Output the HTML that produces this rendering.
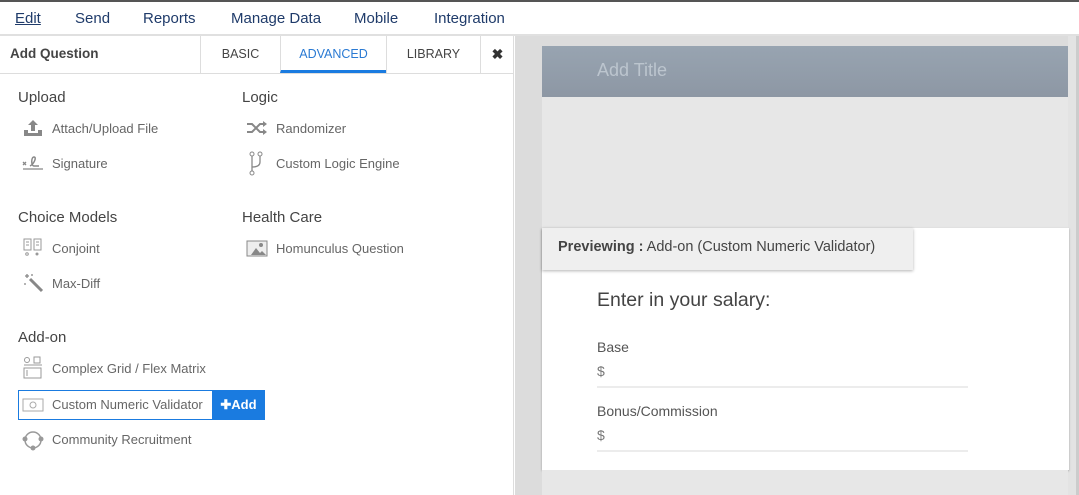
<!DOCTYPE html>
<html><head><style>
*{margin:0;padding:0;box-sizing:border-box}
body{width:1079px;height:495px;overflow:hidden;background:#fff;font-family:"Liberation Sans",sans-serif;position:relative}
.abs{position:absolute}
.nav{left:0;top:0;width:1079px;height:36px;border-top:2px solid #555;border-bottom:2px solid #e0e0e0;background:#fff}
.nav span{position:absolute;top:8px;font-size:15px;color:#1f3b6a}
.left{left:0;top:36px;width:514px;height:459px;background:#fff;border-right:1px solid #ddd}
.hdr{left:0;top:36px;width:514px;height:38px;border-bottom:1px solid #ddd}
.tab{position:absolute;top:0;height:37px;font-size:12.5px;color:#444;text-align:center;line-height:36px;border-left:1px solid #ddd}
.sec{position:absolute;font-size:15px;color:#444}
.it{position:absolute;font-size:13px;color:#666}
.ic{position:absolute;width:22px;height:20px}
.right{left:515px;top:36px;width:564px;height:459px;background:#dcdcdc}
</style></head><body>
<div class="abs nav">
<span style="left:15px;text-decoration:underline;color:#1f3b6a">Edit</span>
<span style="left:75px">Send</span>
<span style="left:143px">Reports</span>
<span style="left:231px">Manage Data</span>
<span style="left:354px">Mobile</span>
<span style="left:434px">Integration</span>
</div>
<div class="abs left"></div>
<div class="abs hdr">
<div style="position:absolute;left:10px;top:10px;font-size:13.5px;font-weight:bold;color:#444">Add Question</div>
<div class="tab" style="left:200px;width:80px">BASIC</div>
<div class="tab" style="left:280px;width:106px;color:#2a7ad3;border-bottom:3px solid #1a7be0;height:37px">ADVANCED</div>
<div class="tab" style="left:386px;width:94px">LIBRARY</div>
<div class="tab" style="left:480px;width:34px;font-weight:bold;font-size:14px;color:#333">✖</div>
</div>
<div class="sec" style="left:18px;top:89px">Upload</div>
<div class="sec" style="left:242px;top:89px">Logic</div>
<div class="sec" style="left:18px;top:209px">Choice Models</div>
<div class="sec" style="left:242px;top:209px">Health Care</div>
<div class="sec" style="left:18px;top:329px">Add-on</div>

<svg class="ic" style="left:22px;top:118px" viewBox="0 0 22 20"><path d="M11 2l-5 5h3v6h4V7h3z M2 12h4v3h10v-3h4v6H2z" fill="#888"/></svg>
<div class="it" style="left:52px;top:121px">Attach/Upload File</div>
<svg class="ic" style="left:22px;top:153px" viewBox="0 0 22 20"><path d="M1 9l3 3M4 9l-3 3M1 16h20" stroke="#888" stroke-width="1.3"/><path d="M8 13c4-2 7-9 4-9s-3 9 0 9h5" stroke="#888" fill="none" stroke-width="1.5"/></svg>
<div class="it" style="left:52px;top:156px">Signature</div>
<svg class="ic" style="left:246px;top:118px" viewBox="0 0 22 20"><path d="M1 6h5l8 8h5M1 14h5l8-8h5" stroke="#888" fill="none" stroke-width="2"/><path d="M17 3l4 3-4 3zM17 11l4 3-4 3z" fill="#888"/></svg>
<div class="it" style="left:276px;top:121px">Randomizer</div>
<svg class="ic" style="left:246px;top:151px;height:26px" viewBox="0 0 22 26"><circle cx="6" cy="3" r="2" stroke="#888" fill="none"/><circle cx="14" cy="3" r="2" stroke="#888" fill="none"/><circle cx="6" cy="22" r="2" stroke="#888" fill="none"/><path d="M6 5v15M14 5v6q0 5-8 5" stroke="#888" fill="none" stroke-width="1.3"/></svg>
<div class="it" style="left:276px;top:156px">Custom Logic Engine</div>

<svg class="ic" style="left:22px;top:238px" viewBox="0 0 22 20"><rect x="2" y="1" width="7" height="11" stroke="#999" fill="none"/><rect x="12" y="1" width="7" height="11" stroke="#999" fill="none"/><path d="M4 4h3M4 7h3M14 4h3M14 7h3" stroke="#999"/><circle cx="5" cy="16" r="1.3" stroke="#999" fill="none"/><circle cx="15" cy="16" r="1.5" fill="#999"/></svg>
<div class="it" style="left:52px;top:241px">Conjoint</div>
<svg class="ic" style="left:22px;top:273px" viewBox="0 0 22 20"><path d="M8 6l12 12" stroke="#888" stroke-width="3"/><path d="M5 1v4M3 3h4M2 11l2 0M10 1l0 2" stroke="#888" stroke-width="1.3"/></svg>
<div class="it" style="left:52px;top:276px">Max-Diff</div>
<svg class="ic" style="left:246px;top:238px" viewBox="0 0 22 20"><rect x="1" y="3" width="20" height="15" stroke="#888" fill="#eee"/><path d="M5 17l5-7 4 5 2-2 4 4z" fill="#888"/><circle cx="15" cy="7" r="2" fill="#888"/></svg>
<div class="it" style="left:276px;top:241px">Homunculus Question</div>

<svg class="ic" style="left:22px;top:356px;height:24px" viewBox="0 0 22 24"><circle cx="5" cy="4" r="2.5" stroke="#999" fill="none"/><rect x="12" y="1" width="6" height="6" stroke="#999" fill="none"/><path d="M2 9h18" stroke="#999"/><rect x="2" y="12" width="17" height="10" stroke="#999" fill="none"/><path d="M5 14v6" stroke="#999"/></svg>
<div class="it" style="left:52px;top:361px">Complex Grid / Flex Matrix</div>
<div class="abs" style="left:18px;top:390px;width:247px;height:30px;border:1px solid #1a7be0;background:#fff"></div>
<svg class="ic" style="left:22px;top:395px" viewBox="0 0 22 20"><rect x="1" y="4" width="20" height="12" stroke="#aaa" fill="none"/><circle cx="11" cy="10" r="3" stroke="#aaa" fill="none"/></svg>
<div class="it" style="left:52px;top:397px">Custom Numeric Validator</div>
<div class="abs" style="left:212px;top:390px;width:53px;height:30px;background:#1a7be0;color:#fff;font-size:13px;font-weight:bold;line-height:29px;text-align:center">✚Add</div>
<svg class="ic" style="left:22px;top:428px;height:24px" viewBox="0 0 22 24"><circle cx="11" cy="12" r="8" stroke="#999" fill="none" stroke-width="1.5"/><circle cx="3" cy="11" r="2.5" fill="#999"/><circle cx="19" cy="11" r="2.5" fill="#999"/><circle cx="11" cy="20" r="2.5" fill="#999"/></svg>
<div class="it" style="left:52px;top:432px">Community Recruitment</div>

<div class="abs right"></div>
<div class="abs" style="left:542px;top:46px;width:527px;height:51px;background:linear-gradient(#98a4b1,#8d97a4)"></div>
<div class="abs" style="left:597px;top:60px;font-size:18px;color:#bcc5ce">Add Title</div>
<div class="abs" style="left:542px;top:97px;width:527px;height:132px;background:#e7e7e7"></div>
<div class="abs" style="left:1068px;top:36px;width:8px;height:459px;background:#e3e3e3"></div>
<div class="abs" style="left:1076px;top:36px;width:3px;height:459px;background:#ccc"></div>
<div class="abs" style="left:542px;top:228px;width:527px;height:242px;background:#fff;box-shadow:0 1px 2px rgba(0,0,0,.3)"></div>
<div class="abs" style="left:542px;top:470px;width:526px;height:25px;background:#e7e7e7"></div>
<div class="abs" style="left:542px;top:228px;width:371px;height:42px;background:#efefef;box-shadow:0 1px 3px rgba(0,0,0,.3);font-size:14.5px;color:#444;line-height:39px;padding-left:16px"><b>Previewing :</b> Add-on (Custom Numeric Validator)</div>
<div class="abs" style="left:597px;top:289px;font-size:19.5px;color:#444">Enter in your salary:</div>
<div class="abs" style="left:597px;top:339px;font-size:14px;color:#555">Base</div>
<div class="abs" style="left:597px;top:363px;font-size:14px;color:#777">$</div>
<div class="abs" style="left:597px;top:386px;width:371px;height:2px;background:#ececec"></div>
<div class="abs" style="left:597px;top:403px;font-size:14px;color:#555">Bonus/Commission</div>
<div class="abs" style="left:597px;top:427px;font-size:14px;color:#777">$</div>
<div class="abs" style="left:597px;top:450px;width:371px;height:2px;background:#ececec"></div>
</body></html>
